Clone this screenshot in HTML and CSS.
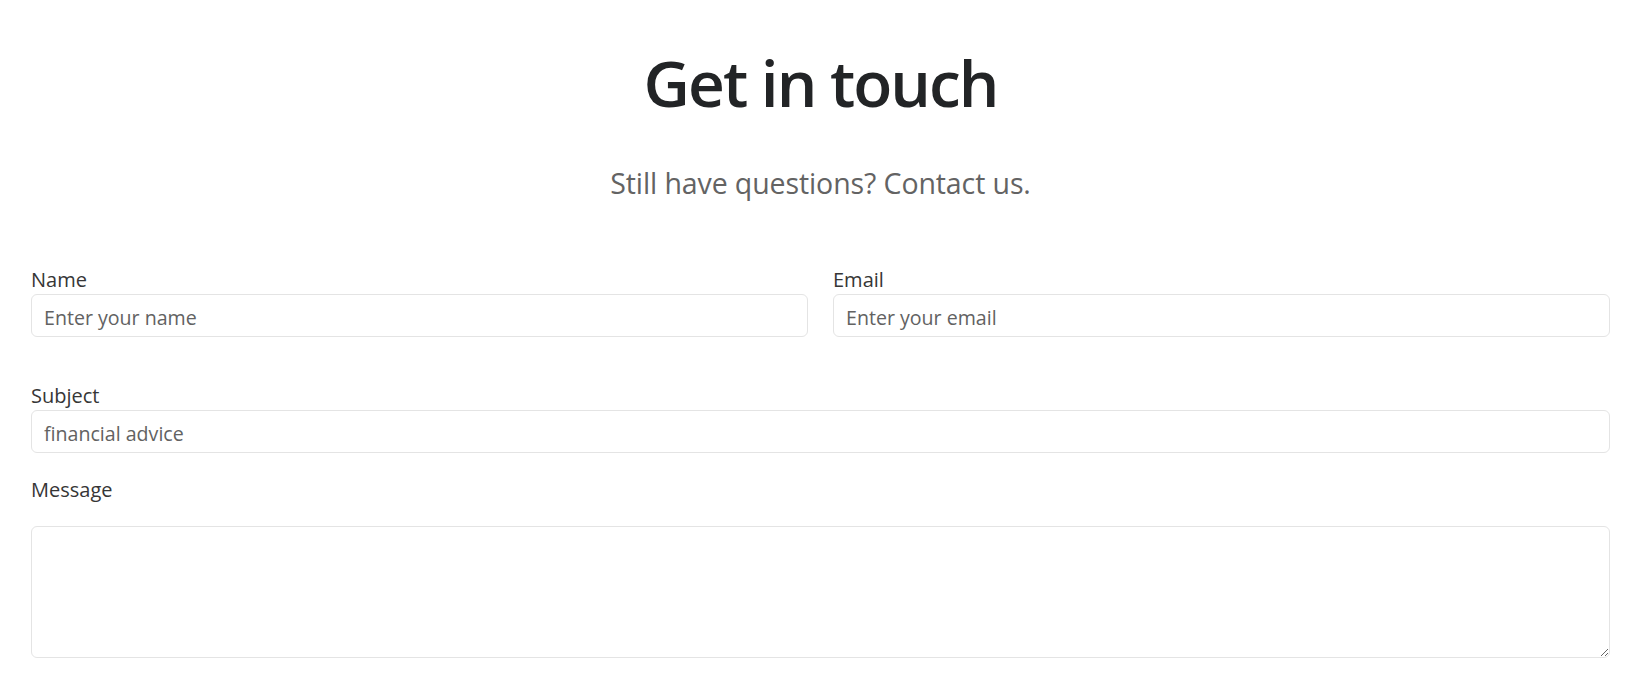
FILE: index.html
```html
<!DOCTYPE html>
<html lang="en">
<head>
<meta charset="utf-8">
<title>Get in touch</title>
<link rel="stylesheet" href="styles.css">
</head>
<body>
<main class="page">
  <h1 class="title">Get in touch</h1>
  <p class="lead">Still have questions? Contact us.</p>
  <form class="contact-form">
    <div class="row-two">
      <div class="field">
        <label class="label" for="name">Name</label>
        <input class="control" id="name" type="text" placeholder="Enter your name">
      </div>
      <div class="field">
        <label class="label" for="email">Email</label>
        <input class="control" id="email" type="email" placeholder="Enter your email">
      </div>
    </div>
    <div class="field field-subject">
      <label class="label" for="subject">Subject</label>
      <input class="control" id="subject" type="text" placeholder="financial advice">
    </div>
    <div class="field field-message">
      <label class="label label-message" for="message">Message</label>
      <textarea class="control textarea" id="message"></textarea>
    </div>
  </form>
</main>
</body>
</html>
```
FILE: styles.css
```css
* { box-sizing: border-box; }
html, body { margin: 0; padding: 0; background: #ffffff; }
body {
  font-family: "Open Sans", "Noto Sans", "DejaVu Sans", sans-serif;
  color: #333333;
}
.page {
  padding: 0 27px 0 31px;
}
.title {
  margin: 43px 0 0 0;
  font-size: 64px;
  line-height: 80px;
  font-weight: 600;
  color: #222426;
  text-align: center;
  letter-spacing: -2px;
}
.lead {
  margin: 40px 0 0 0;
  font-size: 28.5px;
  line-height: 40px;
  font-weight: 400;
  color: #636363;
  text-align: center;
  letter-spacing: -0.1px;
}
.contact-form {
  margin-top: 62px;
  display: flex;
  flex-direction: column;
}
.row-two {
  display: grid;
  grid-template-columns: 1fr 1fr;
  column-gap: 25px;
}
.field {
  display: flex;
  flex-direction: column;
}
.field-subject { margin-top: 44px; }
.field-message { margin-top: 22px; }
.label {
  font-size: 20px;
  line-height: 29px;
  color: #363636;
}
.label-message { margin-bottom: 22px; }
.control {
  width: 100%;
  height: 43px;
  padding: 4px 12px 0 12px;
  font-family: inherit;
  font-size: 19.6px;
  color: #5f5f5f;
  background: #ffffff;
  border: 1px solid #e4e4e4;
  border-radius: 6px;
  outline: none;
}
.control::placeholder { color: #626262; opacity: 1; }
.textarea {
  height: 132px;
  padding: 10px 12px;
  resize: both;
  display: block;
}
```
